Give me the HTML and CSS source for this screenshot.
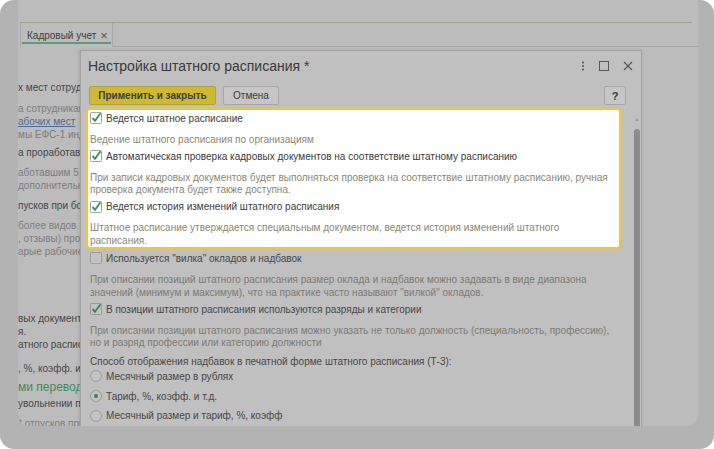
FILE: index.html
```html
<!DOCTYPE html>
<html lang="ru">
<head>
  <meta charset="UTF-8">
  <meta name="viewport" content="width=device-width, initial-scale=1.0">
  <title>Настройка штатного расписания</title>
  <link rel="stylesheet" href="styles.css">
</head>
<body>

  <div class="frame">
    <div class="screen">

      <div class="tabs">
        <div class="tab">Кадровый учет <span class="tab-x">×</span></div>
        <div class="tab-rest"></div>
      </div>

      <div class="page">
        <div class="pg g1">х мест сотрудников по штатному расписанию</div>
        <div class="pg g2">
          <div class="muted">а сотрудникам по штатному расписанию</div>
          <div class="link">абочих мест</div>
          <div class="muted">мы ЕФС-1 индивидуальные сведения</div>
        </div>
        <div class="pg g3">а проработавшим полный год</div>
        <div class="pg g4 muted">аботавшим 5 лет<br>дополнительный отпуск</div>
        <div class="pg g5">пусков при больничном</div>
        <div class="pg g6 muted">более видов<br>, отзывы) профилей<br>арые рабочие места</div>
        <div class="pg g7">вых документов<br>я.<br>атного расписания</div>
        <div class="pg g8">, %, коэфф. и т.д.</div>
        <div class="pg g9 green">ми переводы</div>
        <div class="pg g10">увольнении по собственному</div>
        <div class="pg g11 muted">* отпусков при увольнении</div>
      </div>

      <div class="dialog">
        <div class="dlg-head">
          <div class="dlg-title">Настройка штатного расписания *</div>
          <div class="dlg-icons">
            <svg width="4" height="10" viewBox="0 0 4 10"><circle cx="2" cy="1.5" r="1" fill="#555"/><circle cx="2" cy="5" r="1" fill="#555"/><circle cx="2" cy="8.5" r="1" fill="#555"/></svg>
            <svg width="10" height="10" viewBox="0 0 10 10"><rect x="0.5" y="0.5" width="9" height="9" fill="none" stroke="#555"/></svg>
            <svg width="10" height="10" viewBox="0 0 10 10"><path d="M1 1 L9 9 M9 1 L1 9" stroke="#555" stroke-width="1.1"/></svg>
          </div>
        </div>

        <div class="dlg-buttons">
          <div class="btn btn-main">Применить и закрыть</div>
          <div class="btn btn-cancel">Отмена</div>
          <div class="btn btn-help">?</div>
        </div>

        <div class="dlg-body">
          <div class="dlg-main">
            <div class="hl">
              <div class="row">
                <svg class="cb" width="12" height="12" viewBox="0 0 12 12"><rect x="0.5" y="0.5" width="11" height="11" rx="1" fill="#fff" stroke="#a3a3a3"/><path d="M2.5 6 L5 8.8 L10.5 1.2" fill="none" stroke="#2e9a56" stroke-width="1.9"/></svg>
                <span>Ведется штатное расписание</span>
              </div>
              <div class="note">Ведение штатного расписания по организациям</div>

              <div class="row">
                <svg class="cb" width="12" height="12" viewBox="0 0 12 12"><rect x="0.5" y="0.5" width="11" height="11" rx="1" fill="#fff" stroke="#a3a3a3"/><path d="M2.5 6 L5 8.8 L10.5 1.2" fill="none" stroke="#2e9a56" stroke-width="1.9"/></svg>
                <span>Автоматическая проверка кадровых документов на соответствие штатному расписанию</span>
              </div>
              <div class="note">При записи кадровых документов будет выполняться проверка на соответствие штатному расписанию, ручная<br>проверка документа будет также доступна.</div>

              <div class="row">
                <svg class="cb" width="12" height="12" viewBox="0 0 12 12"><rect x="0.5" y="0.5" width="11" height="11" rx="1" fill="#fff" stroke="#a3a3a3"/><path d="M2.5 6 L5 8.8 L10.5 1.2" fill="none" stroke="#2e9a56" stroke-width="1.9"/></svg>
                <span>Ведется история изменений штатного расписания</span>
              </div>
              <div class="note">Штатное расписание утверждается специальным документом, ведется история изменений штатного<br>расписания.</div>
            </div>

            <div class="dim">
              <div class="row first">
                <svg class="cb" width="12" height="12" viewBox="0 0 12 12"><rect x="0.5" y="0.5" width="11" height="11" rx="1" fill="#c3c3c3" stroke="#9b9b9b"/></svg>
                <span>Используется "вилка" окладов и надбавок</span>
              </div>
              <div class="note">При описании позиций штатного расписания размер оклада и надбавок можно задавать в виде диапазона<br>значений (минимум и максимум), что на практике часто называют "вилкой" окладов.</div>

              <div class="row">
                <svg class="cb" width="12" height="12" viewBox="0 0 12 12"><rect x="0.5" y="0.5" width="11" height="11" rx="1" fill="#c3c3c3" stroke="#9b9b9b"/><path d="M2.5 6 L5 8.8 L10.5 1.2" fill="none" stroke="#3d8456" stroke-width="1.9"/></svg>
                <span>В позиции штатного расписания используются разряды и категории</span>
              </div>
              <div class="note">При описании позиции штатного расписания можно указать не только должность (специальность, профессию),<br>но и разряд профессии или категорию должности</div>

              <div class="caption">Способ отображения надбавок в печатной форме штатного расписания (Т-3):</div>
              <div class="row radio-row">
                <span class="radio"></span>
                <span>Месячный размер в рублях</span>
              </div>
              <div class="row radio-row">
                <span class="radio on"></span>
                <span>Тариф, %, коэфф. и т.д.</span>
              </div>
              <div class="row radio-row">
                <span class="radio"></span>
                <span>Месячный размер и тариф, %, коэфф</span>
              </div>
            </div>
          </div>

          <div class="scroll">
            <div class="scroll-up"></div>
            <div class="scroll-thumb"></div>
          </div>
        </div>
      </div>

    </div>
  </div>

</body>
</html>
```

FILE: styles.css
```css
* {
  box-sizing: border-box;
}

body {
  margin: 0;
  background-color: #fff;
  font-family: 'Liberation Sans', Arial, sans-serif;
  font-size: 10px;
  color: #444;
}

.frame {
  width: 714px;
  height: 449px;
  background-color: #b3b3b3;
  border-radius: 14px;
  padding: 0 16px 23px 18px;
  overflow: hidden;
}

.screen {
  position: relative;
  height: 100%;
  background-color: #bcbcbc;
  border-radius: 0 0 10px 10px;
  overflow: hidden;
}

/* вкладки */
.tabs {
  display: flex;
  margin: 22px 6px 0 2px;
  border-top: 1px solid #a4a18d;
}

.tab {
  position: relative;
  width: 93px;
  height: 24px;
  padding-left: 6px;
  display: flex;
  align-items: center;
  border-left: 1px solid #a9a9a9;
  border-right: 1px solid #a9a9a9;
  color: #3e3e3e;
  white-space: nowrap;
}

.tab::after {
  content: '';
  position: absolute;
  left: 1px;
  right: 1px;
  bottom: 3px;
  height: 2px;
  background-color: #5f9a7a;
}

.tab-x {
  margin-left: 4px;
  font-size: 13px;
  color: #555;
}

.tab-rest {
  flex: 1;
  margin-right: -6px;
  border-bottom: 1px solid #a6a6a6;
}

/* страница за окном */
.page {
  white-space: nowrap;
  line-height: 13px;
  color: #474747;
}

.pg .muted, .pg.muted {
  color: #7d7d7d;
}

.pg .link {
  color: #4d6b98;
  text-decoration: underline;
}

.g1 { margin-top: 33.5px; }
.g2 { margin-top: 8px; }
.g3 { margin-top: 5px; }
.g4 { margin-top: 7px; }
.g5 { margin-top: 7px; }
.g6 { margin-top: 7px; }
.g7 { margin-top: 54px; }
.g8 { margin-top: 11px; }
.g9 { margin-top: 3.5px; }
.g10 { margin-top: 0.5px; }
.g11 { margin-top: 7px; }

.green {
  font-size: 12px;
  line-height: 18px;
  color: #3e8a5c;
}

/* окно настройки */
.dialog {
  position: absolute;
  left: 62px;
  top: 50px;
  bottom: 0;
  width: 562px;
  display: flex;
  flex-direction: column;
  background-color: #c0c0c0;
  border: 1px solid #a3a3a3;
  border-bottom: none;
  box-shadow: -1px 0 3px rgba(0,0,0,0.12);
}

.dlg-head {
  height: 30px;
  display: flex;
  align-items: center;
  padding: 0 8px 0 7px;
}

.dlg-title {
  flex: 1;
  font-size: 14px;
  color: #3a3a3a;
}

.dlg-icons {
  display: flex;
  align-items: center;
  gap: 14px;
}

.dlg-buttons {
  display: flex;
  gap: 7px;
  margin-top: 5px;
  padding: 0 15px 0 8px;
}

.btn {
  height: 19px;
  display: flex;
  align-items: center;
  justify-content: center;
  background-color: #c6c6c6;
  border: 1px solid #a6a6a6;
  border-radius: 2px;
  color: #3c3c3c;
  white-space: nowrap;
}

.btn-main {
  width: 127px;
  background-color: #cdb935;
  border-color: #b3a132;
  font-weight: bold;
}

.btn-cancel {
  width: 56px;
}

.btn-help {
  width: 22px;
  margin-left: auto;
  font-weight: bold;
  font-size: 11px;
}

.dlg-body {
  flex: 1;
  display: flex;
}

.dlg-main {
  flex: 1;
  margin-right: 12px;
  padding-left: 5px;
  white-space: nowrap;
}

.hl {
  margin-top: 3px;
  padding: 0 2px;
  background-color: #fff;
  border: 2px solid #efc43e;
  border-radius: 4px;
  color: #3c3c3c;
}

.dim {
  padding-left: 4px;
  color: #474747;
}

.row {
  height: 16px;
  display: flex;
  align-items: center;
  gap: 4px;
  margin-top: 2px;
}

.hl .row:first-child {
  margin-top: 0;
}

.dim .row.first {
  margin-top: 1px;
}

.cb {
  overflow: visible;
  flex: none;
}

.note {
  margin-top: 7.5px;
  line-height: 12.6px;
  color: #8c8870;
}

.dim .note {
  color: #7c7b73;
}

.caption {
  margin-top: 5px;
  line-height: 13px;
}

.radio-row {
  margin-top: 3.7px;
}

.caption + .radio-row {
  margin-top: 0.5px;
}

.radio {
  width: 12px;
  height: 12px;
  flex: none;
  border: 1px solid #9b9b9b;
  border-radius: 50%;
  background-color: #c3c3c3;
  display: flex;
  align-items: center;
  justify-content: center;
}

.radio.on::after {
  content: '';
  width: 4px;
  height: 4px;
  border-radius: 50%;
  background-color: #3d7e55;
}

.scroll {
  width: 8px;
  display: flex;
  flex-direction: column;
  align-items: center;
  padding-top: 13px;
}

.scroll-up {
  width: 0;
  height: 0;
  border-left: 2.5px solid transparent;
  border-right: 2.5px solid transparent;
  border-bottom: 3px solid #9a9a9a;
}

.scroll-thumb {
  flex: 1;
  width: 6px;
  margin-top: 8px;
  background-color: #8b8b8b;
  border-radius: 3px 3px 0 0;
}
```
